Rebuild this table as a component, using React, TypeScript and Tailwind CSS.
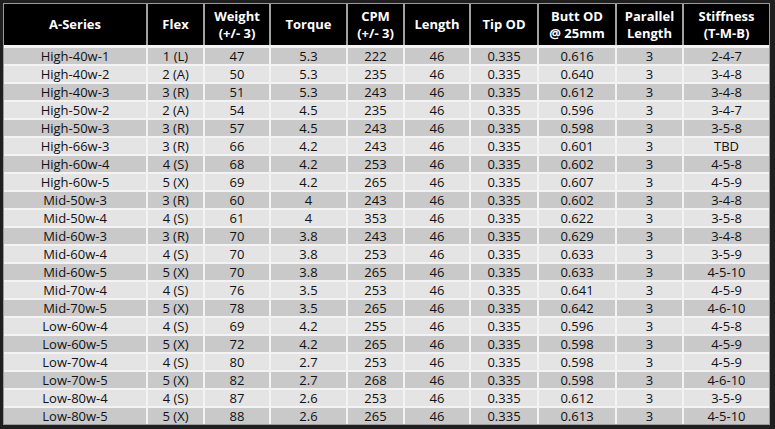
import React from "react";

// column template shared by header + body rows
const cols = "grid grid-cols-[142px_55px_64px_75px_55px_64px_66px_76px_65px_85px] gap-x-[2px]";

const headers: string[][] = [
  ["A-Series"],
  ["Flex"],
  ["Weight", "(+/- 3)"],
  ["Torque"],
  ["CPM", "(+/- 3)"],
  ["Length"],
  ["Tip OD"],
  ["Butt OD", "@ 25mm"],
  ["Parallel", "Length"],
  ["Stiffness", "(T-M-B)"],
];

const rows: string[][] = [
  ["High-40w-1", "1 (L)", "47", "5.3", "222", "46", "0.335", "0.616", "3", "2-4-7"],
  ["High-40w-2", "2 (A)", "50", "5.3", "235", "46", "0.335", "0.640", "3", "3-4-8"],
  ["High-40w-3", "3 (R)", "51", "5.3", "243", "46", "0.335", "0.612", "3", "3-4-8"],
  ["High-50w-2", "2 (A)", "54", "4.5", "235", "46", "0.335", "0.596", "3", "3-4-7"],
  ["High-50w-3", "3 (R)", "57", "4.5", "243", "46", "0.335", "0.598", "3", "3-5-8"],
  ["High-66w-3", "3 (R)", "66", "4.2", "243", "46", "0.335", "0.601", "3", "TBD"],
  ["High-60w-4", "4 (S)", "68", "4.2", "253", "46", "0.335", "0.602", "3", "4-5-8"],
  ["High-60w-5", "5 (X)", "69", "4.2", "265", "46", "0.335", "0.607", "3", "4-5-9"],
  ["Mid-50w-3", "3 (R)", "60", "4", "243", "46", "0.335", "0.602", "3", "3-4-8"],
  ["Mid-50w-4", "4 (S)", "61", "4", "353", "46", "0.335", "0.622", "3", "3-5-8"],
  ["Mid-60w-3", "3 (R)", "70", "3.8", "243", "46", "0.335", "0.629", "3", "3-4-8"],
  ["Mid-60w-4", "4 (S)", "70", "3.8", "253", "46", "0.335", "0.633", "3", "3-5-9"],
  ["Mid-60w-5", "5 (X)", "70", "3.8", "265", "46", "0.335", "0.633", "3", "4-5-10"],
  ["Mid-70w-4", "4 (S)", "76", "3.5", "253", "46", "0.335", "0.641", "3", "4-5-9"],
  ["Mid-70w-5", "5 (X)", "78", "3.5", "265", "46", "0.335", "0.642", "3", "4-6-10"],
  ["Low-60w-4", "4 (S)", "69", "4.2", "255", "46", "0.335", "0.596", "3", "4-5-8"],
  ["Low-60w-5", "5 (X)", "72", "4.2", "265", "46", "0.335", "0.598", "3", "4-5-9"],
  ["Low-70w-4", "4 (S)", "80", "2.7", "253", "46", "0.335", "0.598", "3", "4-5-9"],
  ["Low-70w-5", "5 (X)", "82", "2.7", "268", "46", "0.335", "0.598", "3", "4-6-10"],
  ["Low-80w-4", "4 (S)", "87", "2.6", "253", "46", "0.335", "0.612", "3", "3-5-9"],
  ["Low-80w-5", "5 (X)", "88", "2.6", "265", "46", "0.335", "0.613", "3", "4-5-10"],
];

export default function App() {
  return (
    <div className="min-h-screen bg-[#1f1f1f] pt-[3px] pl-[3px] font-['Open_Sans',sans-serif] text-[13px]">
      <div className="w-[767px] border border-[#9a9a9a] bg-[#f3f3f3]">
        {/* Header */}
        <div className={`${cols} h-[41px] bg-[#a0a0a0]`}>
          {headers.map((h, i) => (
            <div
              key={i}
              className="flex flex-col items-center justify-center bg-black font-bold leading-[17px] text-white"
            >
              {h.map((line) => (
                <span key={line}>{line}</span>
              ))}
            </div>
          ))}
        </div>
        <div className="h-[3px]" />

        {/* Body */}
        <div className="flex flex-col gap-y-[2px]">
          {rows.map((r, ri) => (
            <div key={ri} className={`${cols} h-[16px]`}>
              {r.map((c, ci) => (
                <div
                  key={ci}
                  className={`flex items-center justify-center leading-none text-[#111] ${
                    ri % 2 === 0 ? "bg-[#c9c9c9]" : "bg-[#e4e4e4]"
                  }`}
                >
                  {c}
                </div>
              ))}
            </div>
          ))}
        </div>
      </div>
    </div>
  );
}
